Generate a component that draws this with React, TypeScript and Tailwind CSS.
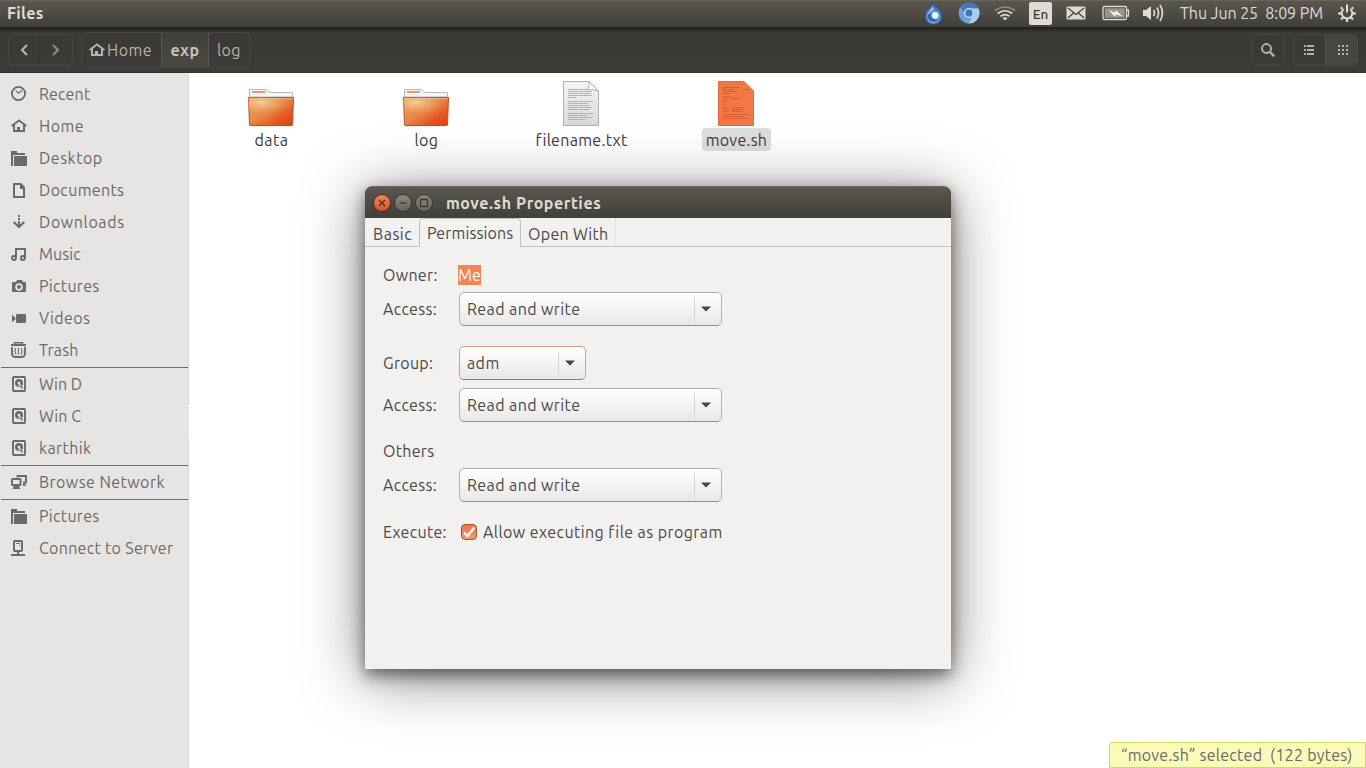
import React from 'react';
import clsx from 'clsx';

type IconName =
  | 'recent'
  | 'home'
  | 'folder'
  | 'document'
  | 'download'
  | 'music'
  | 'camera'
  | 'video'
  | 'trash'
  | 'disk'
  | 'network'
  | 'server';

interface Place {
  icon: IconName;
  label: string;
  tracking?: string;
}

// Places are grouped, a thin line is drawn between the groups
const PLACES: Place[][] = [
  [
    { icon: 'recent', label: 'Recent', tracking: 'tracking-[0.15px]' },
    { icon: 'home', label: 'Home', tracking: 'tracking-[0.5px]' },
    { icon: 'folder', label: 'Desktop', tracking: 'tracking-[0.5px]' },
    { icon: 'document', label: 'Documents', tracking: 'tracking-[0.35px]' },
    { icon: 'download', label: 'Downloads', tracking: 'tracking-[0.6px]' },
    { icon: 'music', label: 'Music', tracking: 'tracking-[0.1px]' },
    { icon: 'camera', label: 'Pictures', tracking: 'tracking-[0.3px]' },
    { icon: 'video', label: 'Videos', tracking: 'tracking-[0.4px]' },
    { icon: 'trash', label: 'Trash', tracking: 'tracking-[0.2px]' },
  ],
  [
    { icon: 'disk', label: 'Win D' },
    { icon: 'disk', label: 'Win C', tracking: 'tracking-[0.1px]' },
    { icon: 'disk', label: 'karthik', tracking: 'tracking-[0.4px]' },
  ],
  [{ icon: 'network', label: 'Browse Network', tracking: 'tracking-[0.43px]' }],
  [
    { icon: 'folder', label: 'Pictures', tracking: 'tracking-[0.3px]' },
    { icon: 'server', label: 'Connect to Server', tracking: 'tracking-[0.3px]' },
  ],
];

function PlaceIcon({ name }: { name: IconName }) {
  const getShape = () => {
    switch (name) {
      case 'recent':
        return (
          <g fill="none" stroke="currentColor">
            <circle cx="7.5" cy="7.5" r="6.6" strokeWidth="1.8" />
            <path d="M4.7 4.6 7.6 7.3 11 4.4" strokeWidth="1.2" />
          </g>
        );
      case 'home':
        return (
          <>
            <path d="M.6 7.9 8 2.4l7.4 5.5" fill="none" stroke="currentColor" strokeWidth="1.9" />
            <path d="M2 7h2v5h2V9h3v3h3V7h2v7H2z" fill="currentColor" />
          </>
        );
      case 'folder':
        return <path d="M0 1h6v2h8v2H2v11H0zM3 6h13v10H3z" fill="currentColor" />;
      case 'document':
        return <path d="M2 1h8l4 4v11H2zm2 2v11h8V7H9V3z" fill="currentColor" fillRule="evenodd" />;
      case 'download':
        return (
          <>
            <path d="M7 1h2v2H7zM7 4h2v2H7zM7 7h2v5H7z" fill="currentColor" />
            <path d="m2.7 8 5.3 5 5.3-5" fill="none" stroke="currentColor" strokeWidth="2.1" />
          </>
        );
      case 'music':
        return (
          <g fill="none" stroke="currentColor" strokeWidth="1.9">
            <circle cx="2.9" cy="12" r="2" />
            <circle cx="11.9" cy="12" r="2" />
            <path d="M5 12V3h9v9" />
          </g>
        );
      case 'camera':
        return (
          <>
            <path
              d="M2 4h3l1-2h5l1 2h2a1 1 0 0 1 1 1v8a1 1 0 0 1-1 1H2a1 1 0 0 1-1-1V5a1 1 0 0 1 1-1z"
              fill="currentColor"
            />
            <circle cx="8" cy="9" r="2.9" fill="none" stroke="#e6e5e3" strokeWidth="1.8" />
          </>
        );
      case 'video':
        return (
          <path
            d="M1 4.5 4.5 8v1L1 12.5zM6 4h8a1 1 0 0 1 1 1v7a1 1 0 0 1-1 1H6a1 1 0 0 1-1-1V5a1 1 0 0 1 1-1z"
            fill="currentColor"
          />
        );
      case 'trash':
        return (
          <g fill="none" stroke="currentColor">
            <path d="M3.5 2.5V.7h8v1.800" strokeWidth="1.4" />
            <path d="M0 3h15" strokeWidth="2" />
            <path d="M1 5v6.500Q1.200 15 4 15h7q2.800 0 3-3.500V5" strokeWidth="1.9" />
            <path d="M4.900 6q-2 3.200.2 6.500M7.500 6v6.500M10.100 6q2 3.200-.2 6.500" strokeWidth="1.1" />
          </g>
        );
      case 'disk':
        return (
          <>
            <rect x="2" y="1" width="12" height="14" rx=".8" fill="none" stroke="currentColor" strokeWidth="1.9" />
            <circle cx="8" cy="7" r="4" fill="currentColor" />
            <circle cx="8" cy="7" r="1.3" fill="#e6e5e3" />
            <path d="m8 8.500 4.200 4.500" stroke="#e6e5e3" strokeWidth="2.4" />
            <path d="m9.2 9.500 2.300 2.900" stroke="currentColor" strokeWidth="1.5" />
          </>
        );
      case 'network':
        return (
          <>
            <path d="M6.5 3.500V2H15v6.500h-3" fill="none" stroke="currentColor" strokeWidth="1.9" />
            <rect x="1" y="5" width="8.5" height="6" rx=".6" fill="none" stroke="currentColor" strokeWidth="1.9" />
            <path d="M3 12h5l1.500 3h-8zM12 9.500h2l1 2.500h-3z" fill="currentColor" />
          </>
        );
      case 'server':
        return (
          <>
            <rect x="3" y="1" width="8" height="10" rx=".8" fill="none" stroke="currentColor" strokeWidth="1.9" />
            <path d="M5 3h4v1H5zM8 5h1v1H8zM6 12h2v2h6v2H0v-2h6z" fill="currentColor" />
          </>
        );
    }
  };

  return (
    <svg className="h-4 w-4 shrink-0" viewBox="0 0 16 16">
      {getShape()}
    </svg>
  );
}

function TopPanel() {
  return (
    <header className="flex h-[27px] shrink-0 items-center justify-between border-t border-[#67645a] bg-linear-to-b from-[#5a574e] to-[#403f3a] pr-[10px] pb-[2px] pl-[7px] text-[#dfdbd2]">
      <span className="text-[16px] leading-6 font-bold tracking-[0.3px]">Files</span>

      {/* Indicators */}
      <div className="flex h-full items-center">
        <svg className="mr-[15px] h-6 w-[19px]" viewBox="0 0 19 24">
          <defs>
            <radialGradient id="drop" cx=".5" cy=".75" r=".65">
              <stop offset="0" stopColor="#8fbdeb" />
              <stop offset=".5" stopColor="#5d93d0" />
              <stop offset="1" stopColor="#2f568c" />
            </radialGradient>
          </defs>
          <path
            d="M9.500 1C11.500 5 18 9.500 18 15.500a8.500 7.700 0 0 1-17 0C1 9.500 7.500 5 9.500 1z"
            fill="url(#drop)"
            stroke="#2f5486"
            strokeWidth=".9"
          />
          <path d="M9.300 4C8 8 3.500 11 3 15q3-5 6.500-6z" fill="#b9d8f5" opacity=".8" />
          <path d="M4 14a6 6 0 0 0 11 4q-3 1.500-6-.5T8 12q-2.500 0-4 2z" fill="#2f67b0" />
          <circle cx="11.200" cy="14.300" r="3.400" fill="#e3f0fc" />
        </svg>
        <svg className="mr-[14px] h-[22px] w-[22px]" viewBox="0 0 22 22">
          <circle cx="11" cy="11" r="10.500" fill="#6b9fd8" />
          <path d="M11 .5a10.500 10.500 0 0 1 9.500 6H11a5 5 0 0 0-5 4L2.500 5A10.500 10.500 0 0 1 11 .5z" fill="#4578b8" />
          <path d="M20.500 6.500a10.500 10.500 0 0 1-10 15l4.500-8q2-4-1-7z" fill="#a9cbed" />
          <circle cx="11" cy="11" r="5" fill="#d6e6f6" />
          <circle cx="11" cy="11" r="3.700" fill="#3d78c0" />
        </svg>
        <svg className="mr-[13px] h-[22px] w-[22px]" viewBox="0 0 22 22" fill="none" stroke="currentColor" strokeWidth="1.700">
          <path d="M1 8.500q10-7 20 0" opacity=".45" />
          <path d="M3.700 11.500q7.300-5.500 14.600 0" />
          <path d="M6.500 14.300q4.500-3.500 9 0" />
          <path d="m8.500 16 2.500 2.500 2.500-2.500q-2.500-1.500-5 0z" fill="currentColor" stroke="none" />
        </svg>
        <span className="mr-[14px] flex h-[23px] w-[23px] items-center justify-center rounded-[2px] bg-[#dfdbd2] pt-px text-[13.500px] font-medium text-[#3c3b37]">
          En
        </span>
        <svg className="mr-4 h-[14px] w-5" viewBox="0 0 20 14">
          <rect x=".5" y=".5" width="19" height="13" rx="1" fill="currentColor" />
          <path d="m2 2 8 6.500L18 2M2 12l5.500-5M18 12l-5.500-5" fill="none" stroke="#45443e" strokeWidth="1.300" />
        </svg>
        <svg className="mr-[12px] h-4 w-7" viewBox="0 0 28 16">
          <rect x="1" y="1.500" width="23.500" height="13" rx="1.500" fill="none" stroke="currentColor" strokeWidth="1.300" />
          <rect x="2.500" y="3" width="20.500" height="10" fill="#97948b" stroke="#55534b" strokeWidth=".6" />
          <path d="M25 5h1.500v6H25" fill="none" stroke="currentColor" strokeWidth="1.300" />
          <path d="m6.500 5 6.500 2.500 1-2.500L20.500 11.500l-6.500-2-1 2.500z" fill="#f3f0e9" />
        </svg>
        <svg className="mr-[15px] h-5 w-[23px]" viewBox="0 0 23 20">
          <path d="M1 7h3l5-4v14l-5-4H1z" fill="currentColor" />
          <path d="M11.500 7q2 3 0 6M14.800 4.500q3.500 5.500 0 11M18 2q5 8 0 16" fill="none" stroke="currentColor" strokeWidth="1.700" />
        </svg>
        <span className="mr-[14px] w-[144px] text-[16px] leading-6 tracking-[-0.06px] whitespace-pre">Thu Jun 25  8:09 PM</span>
        <svg className="h-[18px] w-[18px]" viewBox="0 0 18 18" fill="none" stroke="currentColor">
          <path d="M5.800 5a5.300 5.300 0 1 0 6.400 0" strokeWidth="2" />
          <path d="M9 .5v8" strokeWidth="2" />
          <path
            d="M3.200 9.500H.3M14.800 9.500h2.900M5 13.500l-2 2M13 13.500l2 2M9 15v3M4.200 4.700 2.800 3.300M13.800 4.700l1.400-1.400"
            strokeWidth="2.300"
          />
        </svg>
      </div>
    </header>
  );
}

function Toolbar() {
  const frame = 'flex h-8 overflow-hidden rounded-[5px] border border-[#484741]';

  return (
    <nav className="flex h-[46px] shrink-0 items-start border-b border-[#33322e] bg-linear-to-b from-[#1f1e1b] via-[#3a3935] via-12% to-[#3c3b37] pr-2 pl-2 text-[#b5b2a8]">
      <div className={clsx(frame, 'mt-[7px] w-[65px]')}>
        <button className="flex w-[31px] items-center justify-center border-r border-[#353430] pr-px">
          <svg className="h-3 w-2" viewBox="0 0 8 12" fill="none" stroke="currentColor" strokeWidth="2.200">
            <path d="M7 1 2 6l5 5" />
          </svg>
        </button>
        <button className="flex flex-1 items-center justify-center text-[#8b8981]">
          <svg className="h-3 w-2" viewBox="0 0 8 12" fill="none" stroke="currentColor" strokeWidth="2.200">
            <path d="m1 1 5 5-5 5" />
          </svg>
        </button>
      </div>

      {/* Path bar */}
      <div className="mt-[5px] ml-[8px] flex h-9 w-[169px] rounded-[5px] border border-[#484741] text-[16px]">
        <button className="flex w-[79px] items-center pl-[7px]">
          <PlaceIcon name="home" />
          <span className="ml-[2px] tracking-[0.5px]">Home</span>
        </button>
        <button className="flex w-12 items-center justify-center border-x border-[#5a5850] bg-linear-to-b from-[#403f3a] to-[#4a4943] font-bold tracking-[0.5px] text-[#c6c2b8]">
          exp
        </button>
        <button className="flex flex-1 items-center justify-center tracking-[0.4px]">log</button>
      </div>

      <div className="flex-1" />

      <button className={clsx(frame, 'mt-[7px] w-[33px] items-center justify-center')}>
        <svg className="ml-px h-4 w-4" viewBox="0 0 16 16" fill="none" stroke="currentColor" strokeWidth="1.900">
          <circle cx="6.500" cy="6.500" r="4.500" />
          <path d="m10 10 4.300 4.300" strokeWidth="2.400" />
        </svg>
      </button>
      <div className={clsx(frame, 'mt-[7px] ml-[9px] w-[65px]')}>
        <button className="flex w-[31px] items-center justify-center pr-px">
          <svg className="h-[10px] w-[10px]" viewBox="0 0 10 10" fill="currentColor">
            <path d="M0 0h2v2H0zM3 0h7v2H3zM0 4h2v2H0zM3 4h7v2H3zM0 8h2v2H0zM3 8h7v2H3z" />
          </svg>
        </button>
        <button className="flex flex-1 items-center justify-center border-l border-[#55534b] bg-[#474640] pl-[2px]">
          <svg className="h-[10px] w-[10px]" viewBox="0 0 10 10" fill="currentColor">
            <path d="M0 0h2v2H0zM4 0h2v2H4zM8 0h2v2H8zM0 4h2v2H0zM4 4h2v2H4zM8 4h2v2H8zM0 8h2v2H0zM4 8h2v2H4zM8 8h2v2H8z" />
          </svg>
        </button>
      </div>
    </nav>
  );
}

function Sidebar() {
  return (
    <aside className="relative flex w-[189px] shrink-0 flex-col border-r border-[#dad9d7] bg-[#e6e5e3] pt-[5px] text-[16px] text-[#6b6a67]">
      {PLACES.map((group, index) => (
        <div key={index}>
          {index > 0 && <div className="mt-px ml-px h-px bg-[#6f6e6a]" />}
          {group.map((place) => (
            <div key={place.label} className="flex h-8 items-center pl-[11px]">
              <PlaceIcon name={place.icon} />
              <span className={clsx('ml-3 whitespace-nowrap', place.tracking)}>{place.label}</span>
            </div>
          ))}
        </div>
      ))}

      {/* Resize grip */}
      <div className="absolute top-[332px] -right-px h-8 border-r border-dotted border-white" />
    </aside>
  );
}

function FolderImage() {
  return (
    <svg className="h-12 w-12" viewBox="0 0 48 48">
      <defs>
        <linearGradient id="folder" x1="0" y1="0" x2="1" y2="1">
          <stop offset="0" stopColor="#e9a765" />
          <stop offset=".5" stopColor="#e78345" />
          <stop offset=".75" stopColor="#e4541f" />
          <stop offset="1" stopColor="#d5451a" />
        </linearGradient>
        <radialGradient id="folderGlow" cx=".28" cy=".25" r=".6">
          <stop offset="0" stopColor="#f6d59b" stopOpacity=".9" />
          <stop offset="1" stopColor="#f0b070" stopOpacity="0" />
        </radialGradient>
      </defs>
      <path d="M2.500 40h43v6.500h-43z" fill="#000" opacity=".1" />
      <path d="M2.500 17V9.500h17l3.500 3h22.500V17z" fill="#f5f5f5" stroke="#b9b9b9" />
      <path d="M5 11h13v2H5z" fill="#eb9a6c" />
      <path d="M1.500 17.500h45L45.500 45a1 1 0 0 1-1 .5h-41a1 1 0 0 1-1-.5z" fill="url(#folder)" stroke="#bd5026" />
      <path d="M1.500 17.500h45L46 27Q26 36 2 37z" fill="url(#folderGlow)" />
      <path d="M2 18.500h44" stroke="#f3bd90" opacity=".7" />
    </svg>
  );
}

// Widths of the tiny text lines on a page, 0 leaves a blank row
const PAGE_LINES = [20, 24, 23, 24, 8, 0, 25, 20, 22, 24, 21, 0, 25, 20, 24, 17];

function PageImage({ selected = false }: { selected?: boolean }) {
  return (
    <svg className="h-12 w-12" viewBox="0 0 48 48">
      <defs>
        <linearGradient id="page" x1="0" y1="0" x2="0" y2="1">
          <stop offset="0" stopColor="#f4f4f3" />
          <stop offset="1" stopColor="#d9d9d8" />
        </linearGradient>
      </defs>
      <path
        d="M6.500 1.500H32L41.500 11v34.500h-35z"
        fill={selected ? '#f07746' : 'url(#page)'}
        stroke={selected ? '#e96c3c' : '#b1b1b0'}
      />
      {selected ? (
        <g strokeDasharray="3 .4" opacity=".85">
          <path
            d="M11 7.500h16M11 9.500h11M11 11.500h14M11 13.500h7M20 18.500h8M20 27.500h11M20 29.500h12M20 31.500h10M28 38.500h8"
            stroke="#a5614a"
          />
          <path
            d="M11 16.500h9M11 18.500h7M11 21.500h4M11 24.500h2M11 27.500h5M11 29.500h6M11 31.500h5M11 34.500h24M11 36.500h21M11 38.500h16M32 9.500h6"
            stroke="#e0532c"
          />
        </g>
      ) : (
        <>
          {PAGE_LINES.map((width, i) =>
            width > 0 ? (
              <path key={i} d={`M11 ${9.5 + i * 2}h${width}`} stroke="#b0b0af" strokeDasharray="5 .3" />
            ) : null
          )}
          <path d="M32 1.500q1 4-1.500 8.500 6-1 11 1z" fill="#fff" stroke="#b1b1b0" />
        </>
      )}
    </svg>
  );
}

interface FileItemProps {
  label: string;
  tracking: string;
  selected?: boolean;
  children: React.ReactNode;
}

function FileItem({ label, tracking, selected = false, children }: FileItemProps) {
  return (
    <div className="flex w-[155px] flex-col items-center">
      {children}
      <span
        className={clsx(
          'ml-[2px] flex h-[23px] items-center rounded-[4px] px-1 text-[16px] whitespace-nowrap text-[#3c3c3c]',
          tracking,
          selected && 'bg-[#dededd]'
        )}
      >
        {label}
      </span>
    </div>
  );
}

function WindowButton({ kind }: { kind: 'close' | 'minimize' | 'maximize' }) {
  const shapes = {
    close: 'm6 6 6 6m0-6-6 6',
    minimize: 'M5.500 9h7',
    maximize: 'M5.500 5.500h7v7h-7z',
  };

  return (
    <button
      className={clsx(
        'h-[18px] w-[18px] rounded-full border border-[#35342f]',
        kind === 'close' ? 'bg-linear-to-b from-[#f68456] to-[#e0501f]' : 'bg-linear-to-b from-[#8b8981] to-[#67655e]'
      )}
    >
      <svg className="-m-px h-[18px] w-[18px]" viewBox="0 0 18 18" fill="none" stroke="#3a3833" strokeWidth="1.300">
        <path d={shapes[kind]} />
      </svg>
    </button>
  );
}

interface ComboProps {
  value: string;
  narrow?: boolean;
}

function Combo({ value, narrow = false }: ComboProps) {
  return (
    <button
      className={clsx(
        'flex h-[34px] items-center rounded-[5px] border bg-linear-to-b from-white to-[#e9e8e7] pl-[7px] text-left tracking-[0.4px]',
        narrow ? 'w-[127px] border-[#d9a07c] border-b-[#cb6f43]' : 'w-[263px] border-[#b3b2b0] border-b-[#908f8d]'
      )}
    >
      <span className="flex-1">{value}</span>
      <span className="flex h-6 w-[27px] items-center border-l border-[#d5d4d2] pl-[6px]">
        <svg className="h-[6px] w-[10px]" viewBox="0 0 10 6">
          <path d="M0 .5h10L5 5.500z" fill="#454543" />
        </svg>
      </span>
    </button>
  );
}

function Row({ label, className, children }: { label: string; className?: string; children?: React.ReactNode }) {
  return (
    <div className={clsx('flex items-center', className)}>
      <span className="w-[76px] tracking-[0.3px] whitespace-nowrap">{label}</span>
      {children}
    </div>
  );
}

function PropertiesDialog() {
  return (
    <div className="absolute top-[186px] left-[365px] flex h-[483px] w-[586px] flex-col rounded-t-[7px] bg-[#f2f1f0] text-[16px] text-[#4a4a48] shadow-[0_6px_16px_rgba(0,0,0,0.5),0_8px_60px_rgba(0,0,0,0.5)]">
      <div className="flex h-8 shrink-0 items-center rounded-t-[7px] border-t border-[#6b685f] bg-linear-to-b from-[#5a574e] to-[#403f3a] pl-2">
        <div className="flex gap-[3px]">
          <WindowButton kind="close" />
          <WindowButton kind="minimize" />
          <WindowButton kind="maximize" />
        </div>
        <span className="ml-[13px] font-bold tracking-[0.56px] text-[#dfdbd2]">move.sh Properties</span>
      </div>

      {/* Tabs */}
      <div className="flex h-[29px] shrink-0">
        <div className="flex w-[54px] items-center border-b border-[#c3c2c0] pt-[3px] pl-2 tracking-[0.5px]">Basic</div>
        <div className="flex w-[102px] items-center rounded-t-[4px] border-x border-t border-[#c3c2c0] pl-[7px] tracking-[0.12px]">
          Permissions
        </div>
        <div className="flex w-[95px] items-center border-r border-b border-[#c3c2c0] border-r-[#e3e2e0] pt-[3px] pl-[7px] tracking-[0.3px]">
          Open With
        </div>
        <div className="flex-1 border-b border-[#c3c2c0]" />
      </div>

      <div className="flex flex-col pt-[17px] pl-[18px]">
        <Row label="Owner:" className="h-[22px]">
          <span className="-ml-px flex h-5 w-[23px] items-center bg-[#f0845a] text-white">Me</span>
        </Row>
        <Row label="Access:" className="mt-[6px]">
          <Combo value="Read and write" />
        </Row>
        <Row label="Group:" className="mt-5">
          <Combo value="adm" narrow />
        </Row>
        <Row label="Access:" className="mt-2">
          <Combo value="Read and write" />
        </Row>
        <Row label="Others" className="mt-[18px] h-[22px]" />
        <Row label="Access:" className="mt-[6px]">
          <Combo value="Read and write" />
        </Row>
        <Row label="Execute:" className="mt-[19px] h-[22px]">
          <span className="ml-[2px] flex h-4 w-4 items-center justify-center rounded-[4px] border border-[#a8532f] bg-linear-to-b from-[#ec7444] to-[#ef9a74]">
            <svg className="h-3 w-3" viewBox="0 0 12 12" fill="none" stroke="#fff" strokeWidth="2.300">
              <path d="m1 6.500 3.500 3.500 7-8.500" />
            </svg>
          </span>
          <span className="ml-[6px] tracking-[0.42px] whitespace-nowrap">Allow executing file as program</span>
        </Row>
      </div>
    </div>
  );
}

export default function App() {
  return (
    <div className="relative flex h-[768px] w-[1366px] flex-col overflow-hidden bg-white font-['Ubuntu','Noto_Sans',sans-serif] leading-6">
      <TopPanel />
      <Toolbar />
      <div className="flex min-h-0 flex-1">
        <Sidebar />
        <main className="flex flex-1 items-start pt-[7px] pl-[4px]">
          <FileItem label="data" tracking="tracking-[0.5px]">
            <FolderImage />
          </FileItem>
          <FileItem label="log" tracking="tracking-[0.4px]">
            <FolderImage />
          </FileItem>
          <FileItem label="filename.txt" tracking="tracking-[0.3px]">
            <PageImage />
          </FileItem>
          <FileItem label="move.sh" tracking="tracking-[0.25px]" selected>
            <PageImage selected />
          </FileItem>
        </main>
      </div>

      {/* Floating status bar */}
      <div className="absolute right-0 bottom-0 flex h-[26px] w-[257px] items-center rounded-tl-[3px] border border-[#d8d45c] bg-[#fbfbb9] pl-[11px] text-[16px] tracking-[0.26px] whitespace-pre text-[#6b6a67]">
        “move.sh” selected  (122 bytes)
      </div>

      <PropertiesDialog />
    </div>
  );
}
